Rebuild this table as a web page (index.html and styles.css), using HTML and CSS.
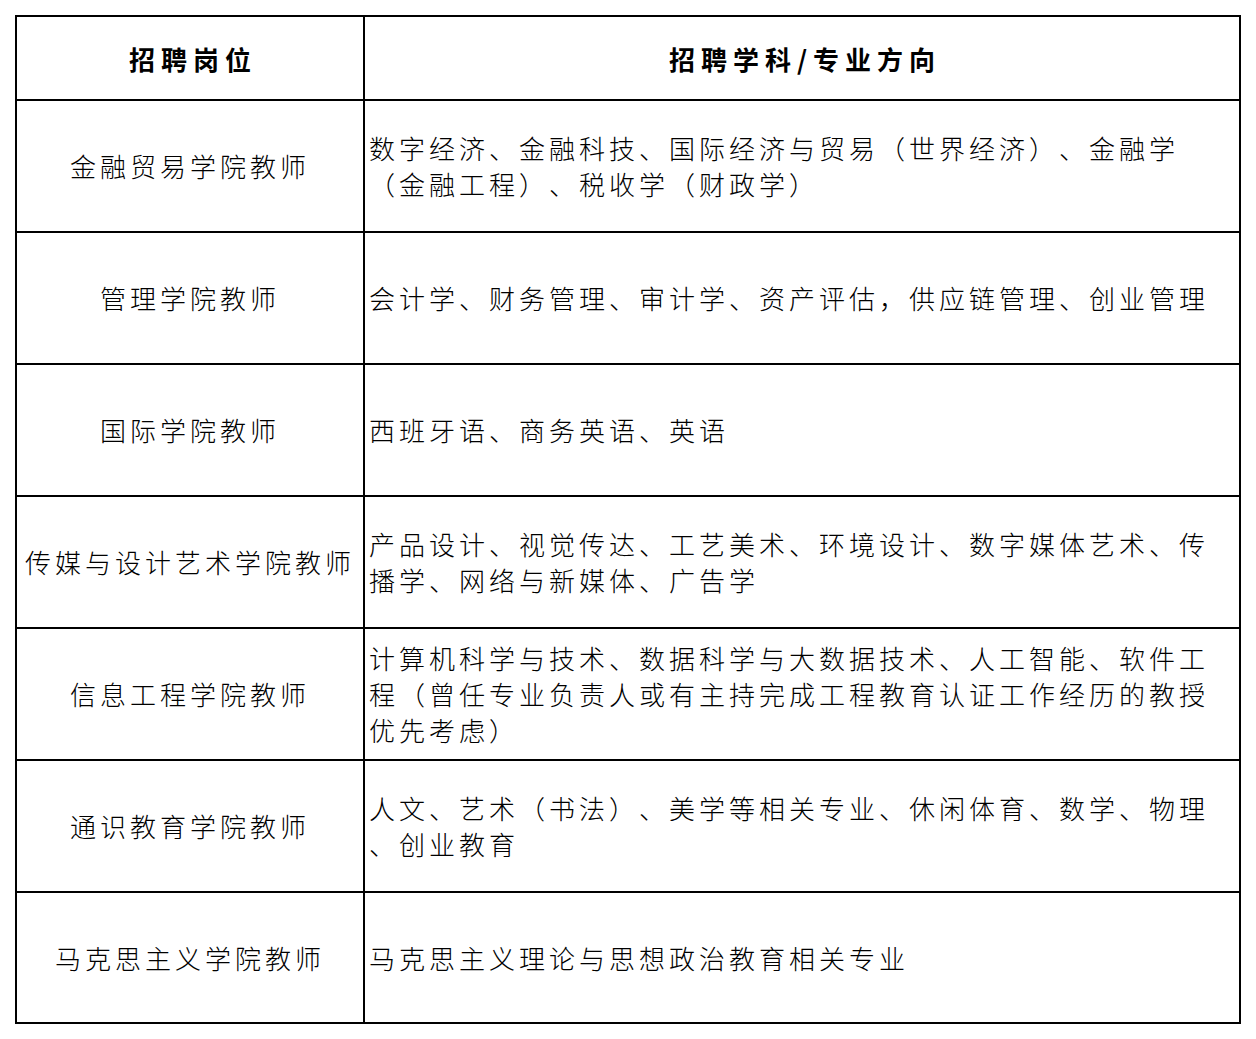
FILE: index.html
```html
<!DOCTYPE html>
<html lang="zh-CN">
<head>
<meta charset="utf-8">
<title>招聘岗位</title>
<link rel="stylesheet" href="styles.css">
</head>
<body>
<table class="jobs">
  <colgroup>
    <col class="col-post">
    <col class="col-field">
  </colgroup>
  <thead>
    <tr class="head">
      <th>招聘岗位</th>
      <th>招聘学科/专业方向</th>
    </tr>
  </thead>
  <tbody>
    <tr>
      <td class="post">金融贸易学院教师</td>
      <td class="field">数字经济、金融科技、国际经济与贸易（世界经济）、金融学（金融工程）、税收学（财政学）</td>
    </tr>
    <tr>
      <td class="post">管理学院教师</td>
      <td class="field">会计学、财务管理、审计学、资产评估，供应链管理、创业管理</td>
    </tr>
    <tr>
      <td class="post">国际学院教师</td>
      <td class="field">西班牙语、商务英语、英语</td>
    </tr>
    <tr>
      <td class="post">传媒与设计艺术学院教师</td>
      <td class="field">产品设计、视觉传达、工艺美术、环境设计、数字媒体艺术、传播学、网络与新媒体、广告学</td>
    </tr>
    <tr>
      <td class="post">信息工程学院教师</td>
      <td class="field">计算机科学与技术、数据科学与大数据技术、人工智能、软件工程（曾任专业负责人或有主持完成工程教育认证工作经历的教授优先考虑）</td>
    </tr>
    <tr>
      <td class="post">通识教育学院教师</td>
      <td class="field">人文、艺术（书法）、美学等相关专业、休闲体育、数学、物理<br>、创业教育</td>
    </tr>
    <tr class="last">
      <td class="post">马克思主义学院教师</td>
      <td class="field">马克思主义理论与思想政治教育相关专业</td>
    </tr>
  </tbody>
</table>
</body>
</html>
```
FILE: styles.css
```css
html, body {
  margin: 0;
  padding: 0;
  background: #fff;
}

body {
  padding: 15px 0 0 15px;
  font-family: "Noto Sans CJK SC", "Noto Sans", sans-serif;
  color: #000;
}

.jobs {
  border-collapse: collapse;
  table-layout: fixed;
  width: 1226px;
  border: 2px solid #000;
}

.col-post {
  width: 348px;
}

.col-field {
  width: 876px;
}

.jobs th,
.jobs td {
  border: 2px solid #000;
  font-size: 26px;
  font-weight: 300;
  letter-spacing: 4px;
  line-height: 36px;
  vertical-align: middle;
  padding: 0 4px;
  text-spacing-trim: space-all;
  font-feature-settings: "fwid" 0;
}

.jobs th {
  font-weight: 700;
  letter-spacing: 6px;
  text-align: center;
  padding: 2px 4px 0 10px;
}

.head {
  height: 84px;
}

.jobs tbody tr {
  height: 132px;
}

.jobs tbody tr.last {
  height: 131px;
}

.post {
  text-align: center;
  padding: 0 2px 0 6px;
}

.field {
  text-align: left;
  padding: 0 4px 0 5px;
}
```
